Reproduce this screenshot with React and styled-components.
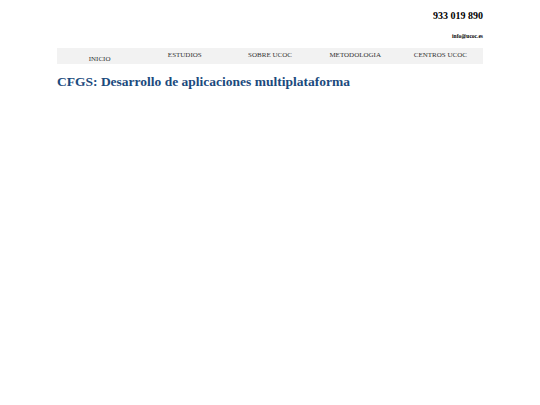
import React from 'react'
import styled, { createGlobalStyle } from 'styled-components'

const GlobalStyle = createGlobalStyle`
  body {
    margin: 0;
    background: #fff;
    font-family: "Liberation Serif", "Times New Roman", serif;
  }
`

const menu = ['INICIO', 'ESTUDIOS', 'SOBRE UCOC', 'METODOLOGIA', 'CENTROS UCOC']

export default function App() {
  return (
    <>
      <GlobalStyle />
      <Page>
        <Contact>
          <Phone>933 019 890</Phone>
          <Mail>info@ucoc.es</Mail>
        </Contact>
        <Nav>
          {menu.map((item, i) => (
            <NavItem key={item} $first={i === 0}>{item}</NavItem>
          ))}
        </Nav>
        <Title>CFGS: Desarrollo de aplicaciones multiplataforma</Title>
      </Page>
    </>
  )
}

const Page = styled.div`
  width: 426px;
  margin: 0 auto;
`

const Contact = styled.div`
  display: flex;
  flex-direction: column;
  align-items: flex-end;
  padding-top: 10px;
`

const Phone = styled.div`
  font-size: 10px;
  font-weight: bold;
  color: #000;
  line-height: 12px;
`

const Mail = styled.div`
  font-size: 5.5px;
  font-weight: bold;
  color: #000;
  line-height: 7px;
  margin-top: 11px;
`

const Nav = styled.nav`
  display: grid;
  grid-template-columns: repeat(5, 1fr);
  height: 16px;
  margin-top: 8px;
  background: #f2f2f2;
`

const NavItem = styled.a`
  text-align: center;
  font-size: 7px;
  line-height: 8px;
  color: #333;
  padding-top: ${p => (p.$first ? '7px' : '3px')};
`

const Title = styled.h1`
  margin: 10px 0 0;
  font-size: 13.5px;
  line-height: 16px;
  font-weight: bold;
  color: #1b4a7d;
`
